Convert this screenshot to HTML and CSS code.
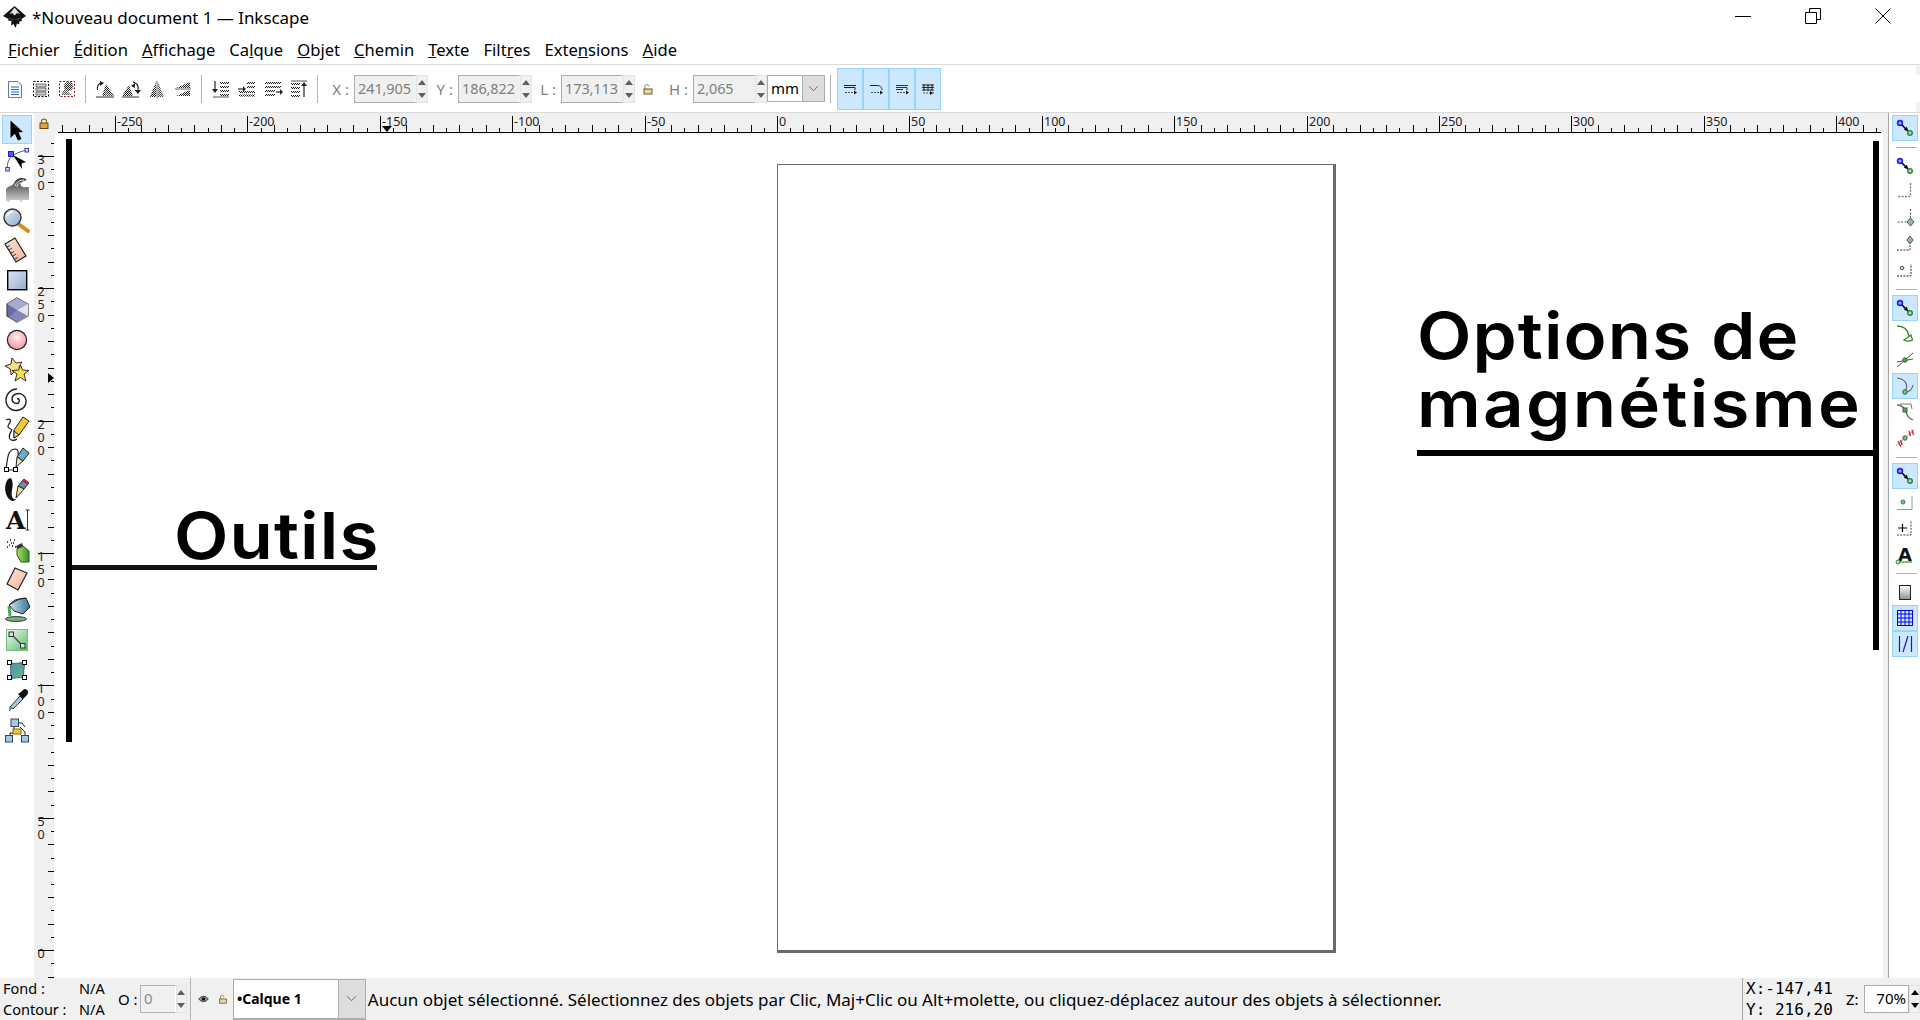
FILE: index.html
```html
<!DOCTYPE html>
<html lang="fr">
<head>
<meta charset="utf-8">
<title>*Nouveau document 1 — Inkscape</title>
<link rel="stylesheet" href="styles.css">
</head>
<body>
<svg class="defs" aria-hidden="true">
  <defs>
    <pattern id="dith" width="2" height="2" patternUnits="userSpaceOnUse"><rect width="2" height="2" fill="#e9e9e9"/><rect width="1" height="1" fill="#222"/><rect x="1" y="1" width="1" height="1" fill="#222"/></pattern>
    <pattern id="dithy" width="2" height="2" patternUnits="userSpaceOnUse"><rect width="2" height="2" fill="#efe3b8"/><rect width="1" height="1" fill="#555"/><rect x="1" y="1" width="1" height="1" fill="#555"/></pattern>
    <linearGradient id="gGrey" x1="0" y1="0" x2="0" y2="1"><stop offset="0" stop-color="#333"/><stop offset="1" stop-color="#d4d4d4"/></linearGradient>
    <linearGradient id="gBlue" x1="0" y1="0" x2="1" y2="1"><stop offset="0" stop-color="#dce8f4"/><stop offset="1" stop-color="#8fadcf"/></linearGradient>
    <linearGradient id="gPeach" x1="0" y1="0" x2="1" y2="1"><stop offset="0" stop-color="#fbe2d6"/><stop offset="1" stop-color="#f2b59c"/></linearGradient>
    <radialGradient id="gPink" cx=".5" cy=".35" r=".7"><stop offset="0" stop-color="#fff0f0"/><stop offset="1" stop-color="#f58a98"/></radialGradient>
    <linearGradient id="gGreen" x1="0" y1="0" x2="1" y2="1"><stop offset="0" stop-color="#f4fbf4"/><stop offset="1" stop-color="#59b96b"/></linearGradient>
    <linearGradient id="gCan" x1="0" y1="0" x2="1" y2="0"><stop offset="0" stop-color="#b6e06a"/><stop offset="1" stop-color="#2c8f28"/></linearGradient>
    <linearGradient id="gTeal" x1="0" y1="0" x2="1" y2="1"><stop offset="0" stop-color="#4e8fb0"/><stop offset="1" stop-color="#6db58e"/></linearGradient>
    <linearGradient id="gBucket" x1="0" y1="0" x2="1" y2="0"><stop offset="0" stop-color="#cfe4ee"/><stop offset="1" stop-color="#2f7395"/></linearGradient>
    <linearGradient id="gPage" x1="0" y1="0" x2="0" y2="1"><stop offset="0" stop-color="#fff"/><stop offset="1" stop-color="#8f8f8f"/></linearGradient>
    <symbol id="snapnodes" viewBox="0 0 26 26">
      <circle cx="8" cy="8" r="2.4" fill="#a0a0ff" stroke="#2222ee" stroke-width="1.6"/>
      <circle cx="18" cy="18" r="2.2" fill="#bfe0bf" stroke="#2d8a3e" stroke-width="1.6"/>
      <path d="M10 10L14 14" stroke="#000" stroke-width="1.6"/>
      <path d="M16.5 16.500L11.800 14.800L14.800 11.800Z" fill="#000"/>
    </symbol>
  </defs>
</svg>

<div class="app">
  <header class="titlebar">
    <svg class="logo" viewBox="0 0 24 24">
      <path d="M11.500 2L23 12L18.500 15L19 17L16.500 17.500L16 20.500L14 19.500L12.500 24L10.500 20L8 21.500L8.500 17L5 16.500L5.500 15L0 12Z" fill="#111"/>
      <path d="M11.500 3.500L6.500 10L9.500 9L11.500 11.500L14 9L17 10Z" fill="#dfe6ee"/>
      <path d="M4 13L11.500 15L19 13L14.500 16.500L11.500 15L9 16.500Z" fill="#3a3a3a"/>
    </svg>
    <span class="doc-title">*Nouveau document 1 — Inkscape</span>
    <div class="win-controls">
      <svg class="win-btn" viewBox="0 0 16 16"><path d="M0 8.500H16" stroke="#000" fill="none"/></svg>
      <svg class="win-btn" viewBox="0 0 16 16"><path d="M0.500 4.500H11.500V15.500H0.500ZM4.500 4.500V0.500H15.500V11.500H11.500" stroke="#000" fill="none"/></svg>
      <svg class="win-btn" viewBox="0 0 16 16"><path d="M0.500 0.500L15.500 15.500M15.500 0.500L0.500 15.500" stroke="#000" fill="none"/></svg>
    </div>
  </header>

  <nav class="menubar">
    <span class="menu-item"><u>F</u>ichier</span>
    <span class="menu-item"><u>É</u>dition</span>
    <span class="menu-item"><u>A</u>ffichage</span>
    <span class="menu-item">Ca<u>l</u>que</span>
    <span class="menu-item"><u>O</u>bjet</span>
    <span class="menu-item"><u>C</u>hemin</span>
    <span class="menu-item"><u>T</u>exte</span>
    <span class="menu-item">Filt<u>r</u>es</span>
    <span class="menu-item">Exte<u>n</u>sions</span>
    <span class="menu-item"><u>A</u>ide</span>
  </nav>

  <div class="commandbar">
    <div class="cmd-btn"><svg class="ico26" viewBox="0 0 26 26"><path d="M6.500 5.500H16L19.500 9V21.500H6.500Z" fill="#f6f9fd" stroke="#5b7ea8"/><path d="M9 11H17M9 13.500H17M9 16H17M9 18.500H17" stroke="#2f66b3"/></svg></div>
    <div class="cmd-btn"><svg class="ico26" viewBox="0 0 26 26"><rect x="5.500" y="5.500" width="15" height="15" fill="none" stroke="#000" stroke-dasharray="2 1.500"/><path d="M8 8H18V11H8ZM8 12H18V15H8ZM8 16H18V19H8Z" fill="#cfcfcf" stroke="#444" stroke-width=".7"/></svg></div>
    <div class="cmd-btn"><svg class="ico26" viewBox="0 0 26 26"><rect x="5.500" y="5.500" width="15" height="15" fill="none" stroke="#8a1c1c" stroke-dasharray="2 1.500"/><circle cx="14.500" cy="10.500" r="4.600" fill="url(#dith)"/><path d="M7 19L11 12L17 19Z" fill="url(#dithy)"/></svg></div>
    <div class="cmd-sep"></div>
    <div class="cmd-btn"><svg class="ico26" viewBox="0 0 26 26"><path d="M10 20L14 8L22 20Z" fill="url(#dith)"/><path d="M4 21H22" stroke="#333"/><path d="M9 7C6 8 5 11 5.500 14" stroke="#222" fill="none" stroke-width="1.200"/><path d="M8 5L12 7L8 10Z" fill="#222"/><path d="M13 15L21 20H13Z" fill="url(#dithy)"/></svg></div>
    <div class="cmd-btn"><svg class="ico26" viewBox="0 0 26 26"><path d="M4 20L11 9L15 20Z" fill="url(#dith)"/><path d="M4 21H21" stroke="#333"/><path d="M15 6C19 7 21 10 20 14" stroke="#222" fill="none" stroke-width="1.200"/><path d="M16.500 14H23L20 18ZM13 10L17 7L17 12Z" fill="#222"/></svg></div>
    <div class="cmd-btn"><svg class="ico26" viewBox="0 0 26 26"><path d="M12 6V21H6Z" fill="url(#dith)"/><path d="M14 6V21H20Z" fill="url(#dithy)"/><path d="M13 5V22" stroke="#666"/></svg></div>
    <div class="cmd-btn"><svg class="ico26" viewBox="0 0 26 26"><path d="M20 6V12H6Z" fill="url(#dith)"/><path d="M20 14V20H6Z" fill="url(#dith)"/><path d="M5 13H21" stroke="#666"/></svg></div>
    <div class="cmd-sep"></div>
    <div class="cmd-btn"><svg class="ico26" viewBox="0 0 26 26"><path d="M7 5V15" stroke="#222" stroke-width="1.200"/><path d="M4 13H10L7 17Z" fill="#222"/><path d="M12 6H21V8H12ZM12 10H21V12H12ZM12 14H21V16H12ZM12 18H21V20H12Z" fill="url(#dith)"/><path d="M5 21H21" stroke="#555"/></svg></div>
    <div class="cmd-btn"><svg class="ico26" viewBox="0 0 26 26"><path d="M4 13H10" stroke="#222" stroke-width="1.200"/><path d="M9 10V16L12 13Z" fill="#222"/><path d="M13 6H21V8H13ZM13 10H21V12H13ZM5 15H21V17H5ZM5 18.500H21V20.500H5Z" fill="url(#dith)"/></svg></div>
    <div class="cmd-btn"><svg class="ico26" viewBox="0 0 26 26"><path d="M5 6H21V8H5ZM5 10H21V12H5ZM5 14H15V16H5ZM5 18H15V20H5Z" fill="url(#dith)"/><path d="M16 16H21" stroke="#222" stroke-width="1.200"/><path d="M20 13V19L23 16Z" fill="#222"/></svg></div>
    <div class="cmd-btn"><svg class="ico26" viewBox="0 0 26 26"><path d="M5 5H21" stroke="#555"/><path d="M5 7H14V9H5ZM5 11H14V13H5ZM5 15H14V17H5ZM5 19H14V21H5Z" fill="url(#dith)"/><path d="M18 9V21" stroke="#222" stroke-width="1.200"/><path d="M15 10H21L18 6Z" fill="#222"/></svg></div>
    <div class="cmd-sep cmd-sep-fields"></div>

    <div class="coord-label coord-x">X :</div>
    <div class="coord-input">241,905</div>
    <div class="spin"><span class="up"></span><span class="down"></span></div>
    <div class="coord-label coord-y">Y :</div>
    <div class="coord-input">186,822</div>
    <div class="spin"><span class="up"></span><span class="down"></span></div>
    <div class="coord-label coord-l">L :</div>
    <div class="coord-input">173,113</div>
    <div class="spin"><span class="up"></span><span class="down"></span></div>
    <div class="lock-slot">
      <svg class="ico12" viewBox="0 0 12 12"><path d="M3 6V3.500C3 1 7 1 7 3.500" fill="none" stroke="#777"/><rect x="2" y="6" width="8" height="5" fill="#e9d9a0" stroke="#6a5a20"/></svg>
    </div>
    <div class="coord-label coord-h">H :</div>
    <div class="coord-input">2,065</div>
    <div class="spin"><span class="up"></span><span class="down"></span></div>
    <div class="unit-combo"><span class="unit-val">mm</span><span class="combo-btn"><svg class="chev" viewBox="0 0 12 8"><path d="M1 1.500L6 6.500L11 1.500" fill="none" stroke="#555"/></svg></span></div>
    <div class="cmd-sep"></div>
    <div class="snap-toggle"><svg class="ico26" viewBox="0 0 26 26"><path d="M7 9.500H19M7 11.500H18V14" stroke="#222" fill="none"/><path d="M8 16.500H19" stroke="#555" stroke-dasharray="2 1"/><path d="M17 14.500L20 16.500L17 18.500Z" fill="#111"/></svg></div>
    <div class="snap-toggle"><svg class="ico26" viewBox="0 0 26 26"><path d="M7 9.500H14C18 9.500 19 12 19 14" stroke="#222" fill="none"/><path d="M8 16.500H19" stroke="#555" stroke-dasharray="2 1"/><path d="M17 14.500L20 16.500L17 18.500Z" fill="#111"/></svg></div>
    <div class="snap-toggle"><svg class="ico26" viewBox="0 0 26 26"><path d="M7 9.500H19M7 11.500H18V14M7 13.500H14" stroke="#333" fill="none"/><path d="M8 16.500H19" stroke="#555" stroke-dasharray="2 1"/><path d="M17 14.500L20 16.500L17 18.500Z" fill="#111"/></svg></div>
    <div class="snap-toggle"><svg class="ico26" viewBox="0 0 26 26"><path d="M7 9H19M7 11.500H19M7 14H19M9 8V15M13 8V15M17 8V15" stroke="#222" fill="none"/><path d="M8 17H19" stroke="#555" stroke-dasharray="2 1"/><path d="M15 15L18 17L15 19Z" fill="#111"/></svg></div>
  </div>

  <main class="workspace">
    <aside class="toolbox">
      <div class="tool tool-on"><svg class="ico30" viewBox="0 0 30 30"><path d="M8.500 5.500V23L12.800 18.800L16 25.500L19.500 24L16.500 17.500L21 17Z" fill="#000"/></svg></div>
      <div class="tool"><svg class="ico30" viewBox="0 0 30 30"><path d="M5.300 24C5 15 8 9 24.700 5" fill="none" stroke="#555"/><rect x="3.800" y="22.500" width="3.500" height="3.500" fill="#dde" stroke="#33c"/><rect x="23" y="3.500" width="3.500" height="3.500" fill="#dde" stroke="#33c"/><rect x="6.500" y="6.500" width="5" height="5" fill="#55f" stroke="#22b"/><path d="M11 10L24 17L19.500 18.500L20 24Z" fill="#000"/></svg></div>
      <div class="tool"><svg class="ico30" viewBox="0 0 30 30"><path d="M4 26V14C7 10 10 12 12 8C14 3 20 2 24 4C26 6 22 5 20 7C18 9 18 11 21 12C24 13 26 11 27 13V25H20V27H18V25H8V27Z" fill="url(#gGrey)"/><path d="M13 11C14 7 18 5 22 5M15 12C15 9 17 8 19 8" fill="none" stroke="#eee"/></svg></div>
      <div class="tool"><svg class="ico30" viewBox="0 0 30 30"><path d="M17 19.500L26 26" stroke="#d98a1f" stroke-width="4" stroke-linecap="round"/><circle cx="10.500" cy="12.500" r="8.500" fill="url(#gBlue)" stroke="#333" stroke-width="1.400"/><path d="M5.500 11C6 8 8 7 11 6.500" stroke="#fff" fill="none" stroke-width="1.500"/></svg></div>
      <div class="tool"><svg class="ico30" viewBox="0 0 30 30"><path d="M3 9L13 3L24 21L14 27Z" fill="url(#gPeach)" stroke="#222" stroke-width="1.200"/><path d="M5 12L8 10.500M7 15L10 13M9 18L12 16.500M11 21L14 19M13 24L16 22.500" stroke="#333"/></svg></div>
      <div class="tool"><svg class="ico30" viewBox="0 0 30 30"><rect x="5.700" y="5.700" width="19" height="19" fill="url(#gBlue)" stroke="#000" stroke-width="1.400"/></svg></div>
      <div class="tool"><svg class="ico30" viewBox="0 0 30 30"><path d="M15 3L26 9V21L15 27L5 21V9Z" fill="#6a6aa8" stroke="#444" stroke-width="1.200"/><path d="M15 3L26 9L15 15L5 9Z" fill="#a8a8d0"/><path d="M26 9V21L15 27V15Z" fill="#e4e4ef"/><path d="M15 15L26 21L15 27L7 22Z" fill="#8585bb"/></svg></div>
      <div class="tool"><svg class="ico30" viewBox="0 0 30 30"><circle cx="15" cy="15" r="9.600" fill="url(#gPink)" stroke="#222" stroke-width="1.200"/></svg></div>
      <div class="tool"><svg class="ico30" viewBox="0 0 30 30"><path d="M10 3L14 8L20 7L17 12L19 17L13 16L9 20L8.500 14L3 11L9 9Z" fill="#f4e08a" stroke="#333"/><path d="M18.500 10L20.500 15L27 15.500L22 19L24 26L18.500 22.500L13 26L15 19L10 15.500L16.500 15Z" fill="#f7e24e" stroke="#333"/></svg></div>
      <div class="tool"><svg class="ico30" viewBox="0 0 30 30"><path d="M15 14C17 13 18 15 17 17C15 20 10 18 10 14C10 9 17 7 21 10C26 14 25 23 17 25C10 27 4 22 4 15C4 9 9 4 15 4" fill="none" stroke="#222" stroke-width="1.400"/></svg></div>
      <div class="tool"><svg class="ico30" viewBox="0 0 30 30"><path d="M4 5C8 3 10 5 7 9C5 12 6 13 9 14C12 15 5 19 8 24C10 27 13 25 15 24" fill="none" stroke="#222" stroke-width="1.300"/><path d="M21 2L27 6L17 20L12 23L12 15Z" fill="#f2c82f" stroke="#222"/><path d="M12 16L17 20L12 23Z" fill="#f5d9b0" stroke="#222"/></svg></div>
      <div class="tool"><svg class="ico30" viewBox="0 0 30 30"><path d="M5 25H13M4 24C6 10 6 5 13 4C17 4 17 9 15 16" fill="none" stroke="#222" stroke-width="1.200"/><rect x="2.500" y="22.500" width="4" height="4" fill="#fff" stroke="#000"/><rect x="11.500" y="22.500" width="4" height="4" fill="#fff" stroke="#000"/><path d="M21 3L27 8L21 16L15 12Z" fill="#6fa9c8" stroke="#222"/><path d="M15 12L21 16L14 22Z" fill="#f5e3b3" stroke="#222"/></svg></div>
      <div class="tool"><svg class="ico30" viewBox="0 0 30 30"><path d="M6 4C2 10 2 18 7 24C10 27 13 26 14 24C10 25 9 20 10 15C11 10 11 6 9 3Z" fill="#111"/><path d="M22 4L27 8L22 14L16 11Z" fill="#5e8fb3" stroke="#222"/><path d="M22 4L27 8L25.500 10L20.500 6Z" fill="#c8202a"/><path d="M16 11L22 14L14 23Z" fill="#f3dc8b" stroke="#222"/></svg></div>
      <div class="tool"><svg class="ico30" viewBox="0 0 30 30"><text x="4" y="24" class="tool-letter">A</text><path d="M25.500 5V25M23.500 5H27.500M23.500 25H27.500" stroke="#333" fill="none"/></svg></div>
      <div class="tool"><svg class="ico30" viewBox="0 0 30 30"><path d="M5 7H6M8 5H9M11 8H12M7 10H8M10 11H11M13 12H14M5 12H6M12 5H13M9 8H10" stroke="#111" stroke-width="1.400"/><path d="M15 14L21 11L27 16L27 27L19 27L15 20Z" fill="url(#gCan)" stroke="#1f5a1c"/><path d="M14 11L20 8L21 11L15 14Z" fill="#333"/></svg></div>
      <div class="tool"><svg class="ico30" viewBox="0 0 30 30"><path d="M13 3L25 8L16 25L5 19Z" fill="url(#gPeach)" stroke="#222" stroke-width="1.200"/></svg></div>
      <div class="tool"><svg class="ico30" viewBox="0 0 30 30"><ellipse cx="14" cy="24" rx="10.500" ry="2.400" fill="#71b877" stroke="#333"/><path d="M7 11L8 21" stroke="#55a35d" stroke-width="3"/><path d="M13 5L24 3L28 12L21 19L12 16L7 10Z" fill="url(#gBucket)" stroke="#222"/><path d="M7 10L17 4C21 3 24 3 24 4" fill="none" stroke="#222"/></svg></div>
      <div class="tool"><svg class="ico30" viewBox="0 0 30 30"><rect x="4.500" y="4.500" width="21" height="21" fill="url(#gGreen)" stroke="#70c080"/><path d="M9.500 9.500L20.500 20.500" stroke="#444" stroke-width="1.200"/><rect x="7" y="7" width="4.500" height="4.500" fill="#ddd" stroke="#333"/><rect x="18.500" y="18.500" width="4.500" height="4.500" fill="#ddd" stroke="#333"/></svg></div>
      <div class="tool"><svg class="ico30" viewBox="0 0 30 30"><path d="M8 8C13 9 18 8 23 7C22 13 21 18 22 23C17 22 12 23 8 24C9 18 9 13 8 8Z" fill="url(#gTeal)" stroke="#3b6a6a"/><rect x="5.500" y="5.500" width="4" height="4" fill="#fff" stroke="#000"/><rect x="20.500" y="5.500" width="4" height="4" fill="#fff" stroke="#000"/><rect x="5.500" y="20.500" width="4" height="4" fill="#fff" stroke="#000"/><rect x="20.500" y="20.500" width="4" height="4" fill="#fff" stroke="#000"/></svg></div>
      <div class="tool"><svg class="ico30" viewBox="0 0 30 30"><path d="M8 22L18 11L21 14L11 24Z" fill="#a9c6db" stroke="#333"/><path d="M16 9L21 14L23 12L25 10C28 7 24 2 21 5L19 7Z" fill="#111"/><path d="M8 22L9 24L7.500 26Z" fill="#4a7fa5" stroke="#4a7fa5"/></svg></div>
      <div class="tool"><svg class="ico30" viewBox="0 0 30 30"><path d="M12 12V18M18 12L23 17V20M12 18H8V21M15 8H20L23 12" fill="none" stroke="#222"/><rect x="9" y="4" width="7.500" height="7.500" fill="#a9c7e4" stroke="#345"/><rect x="11" y="14" width="8" height="5" fill="#f3c53a" stroke="#86670c"/><rect x="3.500" y="20.500" width="7" height="6.500" fill="#a9c7e4" stroke="#345"/><rect x="19.500" y="20.500" width="7" height="6.500" fill="#a9c7e4" stroke="#345"/></svg></div>
    </aside>

    <div class="stage">
      <div class="corner">
        <svg class="ico10" viewBox="0 0 10 11"><path d="M2.500 5V3.200C2.500 0.500 7.500 0.500 7.500 3.200V5" fill="none" stroke="#8a6a1a" stroke-width="1.200"/><rect x="1" y="5" width="8" height="5.500" fill="#d9a83a" stroke="#6b4a0c"/></svg>
      </div>
      <div class="hruler" id="hruler"><span class="mark-h"></span></div>
      <div class="vruler" id="vruler"><span class="mark-v"></span></div>
      <section class="canvas">
        <div class="page"></div>
        <div class="bar bar-left"></div>
        <div class="bar bar-left-h"></div>
        <div class="note note-tools">Outils</div>
        <div class="bar bar-right"></div>
        <div class="bar bar-right-h"></div>
        <div class="note note-snap"><div>Options de</div><div class="note-line-wide">magnétisme</div></div>
      </section>
    </div>

    <aside class="snapbar">
      <div class="snap snap-on"><svg class="ico26"><use href="#snapnodes"/></svg></div>
      <div class="snap-sep"></div>
      <div class="snap"><svg class="ico26"><use href="#snapnodes"/></svg></div>
      <div class="snap"><svg class="ico26" viewBox="0 0 26 26"><path d="M18.500 4V17.500H5" fill="none" stroke="#6a8a6a" stroke-width="1.400" stroke-dasharray="2 1.400"/></svg></div>
      <div class="snap"><svg class="ico26" viewBox="0 0 26 26"><path d="M18.500 4V17H5" fill="none" stroke="#556" stroke-width="1.200" stroke-dasharray="2 1.400"/><path d="M18.500 13L22 17L18.500 21L15 17Z" fill="#9ab79a" stroke="#456"/></svg></div>
      <div class="snap"><svg class="ico26" viewBox="0 0 26 26"><path d="M5 19H18V6" fill="none" stroke="#333" stroke-dasharray="2 1.200"/><path d="M18 5L21 9L18 13L15 9Z" fill="#9ab79a" stroke="#456"/></svg></div>
      <div class="snap"><svg class="ico26" viewBox="0 0 26 26"><path d="M5 19H19V7" fill="none" stroke="#222" stroke-dasharray="2 1.200"/><circle cx="10" cy="11" r="1.800" fill="#bfe0bf" stroke="#456"/></svg></div>
      <div class="snap-sep"></div>
      <div class="snap snap-on"><svg class="ico26"><use href="#snapnodes"/></svg></div>
      <div class="snap"><svg class="ico26" viewBox="0 0 26 26"><path d="M5 5C12 5 16 9 17 15" fill="none" stroke="#2d8a2d" stroke-width="1.400"/><path d="M12 19L19 14L20.500 19C17 21 14 20 12 19Z" fill="none" stroke="#2d8a2d" stroke-width="1.300"/></svg></div>
      <div class="snap"><svg class="ico26" viewBox="0 0 26 26"><path d="M5 20L21 6" stroke="#555"/><path d="M5 15L21 12" stroke="#555"/><circle cx="13" cy="13" r="2.200" fill="#5aa05a" stroke="#2d6a3e"/></svg></div>
      <div class="snap snap-on"><svg class="ico26" viewBox="0 0 26 26"><path d="M5 5C13 6 17 11 13 19M21 12C20 17 17 19 13 19" fill="none" stroke="#666" stroke-width="1.200"/><circle cx="13" cy="19" r="2.300" fill="#7fbf7f" stroke="#2d6a3e"/></svg></div>
      <div class="snap"><svg class="ico26" viewBox="0 0 26 26"><path d="M5 6C10 6 12 9 13 11C15 15 15 19 21 21" fill="none" stroke="#666" stroke-width="1.300"/><path d="M8 5H19L20 10" fill="none" stroke="#777"/><rect x="11" y="9" width="4" height="4" fill="#5aa05a" stroke="#2d6a3e"/></svg></div>
      <div class="snap"><svg class="ico26" viewBox="0 0 26 26"><path d="M4 21L22 5" stroke="#999"/><path d="M6 16L9 22M8.500 15L10 20M17 6L18.500 11M20 5L21.500 10" stroke="#cc2222" stroke-width="1.300"/><circle cx="13" cy="13" r="2.200" fill="#7fbf7f" stroke="#2d6a3e"/></svg></div>
      <div class="snap-sep"></div>
      <div class="snap snap-on"><svg class="ico26"><use href="#snapnodes"/></svg></div>
      <div class="snap"><svg class="ico26" viewBox="0 0 26 26"><path d="M5 20.500H20V7" fill="none" stroke="#999"/><circle cx="11" cy="13" r="2" fill="#7fbf7f" stroke="#2d8a3e"/></svg></div>
      <div class="snap"><svg class="ico26" viewBox="0 0 26 26"><path d="M6 13H15M10.500 9V17" stroke="#000" stroke-width="1.200"/><path d="M5 20H19V5" fill="none" stroke="#444" stroke-dasharray="2 1.200"/></svg></div>
      <div class="snap"><svg class="ico26" viewBox="0 0 26 26"><text x="6" y="20" class="snap-letter">A</text><path d="M6 21H20" stroke="#3a9a4a" stroke-width="1.300"/><circle cx="6" cy="21" r="2" fill="#bfe0bf" stroke="#2d8a3e"/></svg></div>
      <div class="snap-sep"></div>
      <div class="snap"><svg class="ico26" viewBox="0 0 26 26"><rect x="7.500" y="6.500" width="11" height="14" fill="url(#gPage)" stroke="#222"/></svg></div>
      <div class="snap snap-on"><svg class="ico26" viewBox="0 0 26 26"><path d="M5 9H21M5 13H21M5 17H21M9 5V21M13 5V21M17 5V21M5 5.500H21M5 20.500H21M5.500 5V21M20.500 5V21" fill="none" stroke="#0000e0"/></svg></div>
      <div class="snap snap-on"><svg class="ico26" viewBox="0 0 26 26"><path d="M7.500 5V21M19.500 5V21M11 21L16 5" fill="none" stroke="#1515dd" stroke-width="1.200"/></svg></div>
    </aside>
  </main>

  <footer class="statusbar">
    <div class="style-block">
      <span>Fond :</span><span>N/A</span>
      <span>Contour :</span><span>N/A</span>
    </div>
    <div class="opacity-label">O :</div>
    <div class="opacity-input">0</div>
    <div class="spin spin-status"><span class="up"></span><span class="down"></span></div>
    <div class="status-sep"></div>
    <svg class="layer-eye" viewBox="0 0 14 10"><path d="M1 5C4 0.500 10 0.500 13 5C10 9.500 4 9.500 1 5Z" fill="#999" stroke="#222"/><circle cx="7" cy="5" r="2.200" fill="#111"/></svg>
    <svg class="layer-lock" viewBox="0 0 12 12"><path d="M3 6V3.500C3 1 7 1 7 3.500" fill="none" stroke="#777"/><rect x="2" y="6" width="8" height="5" fill="#e9d9a0" stroke="#6a5a20"/></svg>
    <div class="layer-combo"><span class="layer-name">•Calque 1</span><span class="combo-btn layer-btn"><svg class="chev" viewBox="0 0 12 8"><path d="M1 1.500L6 6.500L11 1.500" fill="none" stroke="#555"/></svg></span></div>
    <div class="status-msg">Aucun objet sélectionné. Sélectionnez des objets par Clic, Maj+Clic ou Alt+molette, ou cliquez-déplacez autour des objets à sélectionner.</div>
    <div class="pos-block"><span>X:-147,41</span><span>Y: 216,20</span></div>
    <div class="zoom-label">Z:</div>
    <div class="zoom-input">70%</div>
    <div class="spin spin-zoom"><span class="up"></span><span class="down"></span></div>
  </footer>
</div>
<script src="ruler.js"></script>
</body>
</html>
```

FILE: styles.css
```css
* { box-sizing: border-box; }
html, body { margin: 0; padding: 0; height: 100%; }
body { font-family: "Noto Sans", "Open Sans", sans-serif; background: #fff; color: #000; overflow: hidden; }
svg { display: block; flex: none; overflow: visible; }
.defs { position: absolute; width: 0; height: 0; }

.app { width: 1920px; height: 1020px; display: flex; flex-direction: column; }

/* Title bar */
.titlebar { height: 32px; display: flex; align-items: center; padding-left: 3px; background: #fff; }
.logo { width: 24px; height: 24px; }
.doc-title { margin-left: 5px; font-size: 17px; padding-top: 2px; letter-spacing: -0.05px; }
.win-controls { margin-left: auto; display: flex; align-items: center; padding-right: 29px; gap: 54px; }
.win-btn { width: 16px; height: 16px; }

/* Menu */
.menubar { height: 33px; display: flex; align-items: center; gap: 14px; padding: 3px 0 0 8px; border-bottom: 1px solid #dadada; font-size: 16.6px; }
.menu-item { white-space: nowrap; }

/* Command bar */
.commandbar { position: relative; height: 48px; display: flex; align-items: center; padding-left: 2px; border-bottom: 1px solid #dadada; background: #fff; font-size: 15px; }
.commandbar::before, .commandbar::after { content: ""; position: absolute; right: 0; width: 4px; height: 10px; background: #f0f0f0; }
.commandbar::before { top: 0; }
.commandbar::after { bottom: 0; }
.cmd-btn { width: 26px; height: 26px; }
.ico26 { width: 26px; height: 26px; }
.ico30 { width: 30px; height: 30px; }
.ico12 { width: 12px; height: 12px; }
.ico10 { width: 10px; height: 11px; }
.cmd-sep { width: 1px; height: 28px; margin: 0 6px 0 5px; background: #b4b4b4; flex: none; }
.cmd-sep-fields { margin-right: 0; }
.coord-label { color: #7f7f7f; text-align: right; padding-right: 5px; white-space: nowrap; }
.coord-x { width: 36px; }
.coord-y { width: 30px; }
.coord-l { width: 29px; }
.coord-h { width: 32px; }
.coord-input { width: 62px; height: 28px; border: 1px solid #adadad; border-right-color: #f0f0f0; background: #f0f0f0; color: #7f7f7f; line-height: 25px; padding-left: 3px; font-size: 14.5px; letter-spacing: -0.1px; }
.spin { width: 12px; height: 28px; background: #f0f0f0; border: 1px solid #e4e4e4; display: flex; flex-direction: column; align-items: center; justify-content: space-around; flex: none; }
.spin span { width: 0; height: 0; border-left: 4.5px solid transparent; border-right: 4.5px solid transparent; }
.spin .up { border-bottom: 5px solid #5f5f5f; }
.spin .down { border-top: 5px solid #5f5f5f; }
.lock-slot { width: 26px; display: flex; justify-content: center; }
.unit-combo { width: 58px; height: 27px; display: flex; border: 1px solid #adadad; background: #fff; }
.unit-val { flex: 1; padding-left: 3px; line-height: 24px; color: #000; font-size: 15px; }
.combo-btn { width: 22px; background: #dddddd; border-left: 1px solid #adadad; display: flex; align-items: center; justify-content: center; }
.chev { width: 11px; height: 7px; }
.snap-toggle { width: 26px; height: 42px; background: #cce8ff; border: 1px solid #99d1ff; display: flex; align-items: center; justify-content: center; }

/* Workspace */
.workspace { flex: 1; display: flex; min-height: 0; }
.toolbox { width: 34px; padding: 2px 2px 0; background: #fff; flex: none; }
.tool { width: 30px; height: 30px; border: 1px solid transparent; position: relative; }
.tool svg { margin: -1px; }
.tool-on { background: #cce8ff; border-color: #99d1ff; height: 29px; margin-bottom: 1px; }
.tool-letter { font-family: "DejaVu Serif", serif; font-weight: 700; font-size: 25px; fill: #111; }
.stage { flex: 1; display: grid; grid-template-columns: 20px 1829px; grid-template-rows: 21px 1fr; background: #f0f0f0; min-width: 0; }
.corner { display: flex; justify-content: flex-end; padding: 5px 5px 0 0; }
.hruler, .vruler { position: relative; overflow: hidden; }
.rule-svg { position: absolute; left: 0; top: 0; }
.rule-tick { stroke: #000; stroke-width: 1; shape-rendering: crispEdges; }
.h-label { position: absolute; top: 0; font-size: 12.5px; line-height: 17px; color: #222; }
.v-label { position: absolute; left: 3px; width: 8px; font-size: 12.5px; line-height: 12.8px; color: #222; word-break: break-all; text-align: center; }
.mark-h { position: absolute; left: 328px; top: 13px; width: 0; height: 0; border-left: 5px solid transparent; border-right: 5px solid transparent; border-top: 6px solid #000; z-index: 2; }
.mark-v { position: absolute; left: 14px; top: 239px; width: 0; height: 0; border-top: 5px solid transparent; border-bottom: 5px solid transparent; border-left: 6px solid #000; z-index: 2; }

/* Canvas: annotations sit on a free drawing surface */
.canvas { position: relative; background: #fff; overflow: hidden; }
.page { position: absolute; left: 723px; top: 30px; width: 558.5px; height: 788.5px; background: #fff; border: 1px solid #6a6a6a; border-right-width: 3px; border-bottom-width: 3px; }
.bar { position: absolute; background: #000; }
.bar-left { left: 12px; top: 5px; width: 6px; height: 603px; }
.bar-left-h { left: 18px; top: 431px; width: 305px; height: 5px; background: #111; }
.bar-right { left: 1819px; top: 7px; width: 6px; height: 509px; }
.bar-right-h { left: 1363px; top: 316px; width: 456px; height: 6px; }
.note { position: absolute; font-family: Inter, "Open Sans", sans-serif; font-weight: 600; font-size: 65px; line-height: 67.5px; color: #000; white-space: nowrap; letter-spacing: 1px; transform: scaleX(1.09); transform-origin: left top; }
.note-tools { left: 120px; top: 368px; }
.note-snap { left: 1363px; top: 168px; }
.note-line-wide { letter-spacing: 2.1px; }

/* Snap bar */
.snapbar { width: 32px; flex: none; background: #fff; border-left: 1px solid #a6a6a6; padding: 2px 2px 0 3px; }
.snap { width: 26px; height: 26px; border: 1px solid transparent; }
.snap svg { margin: -1px; }
.snap-on { background: #cce8ff; border-color: #99d1ff; }
.snap-sep { height: 1px; margin: 5.5px 1px 5.5px 4px; background: #b0b0b0; }
.snap-letter { font-family: "DejaVu Sans", sans-serif; font-weight: 700; font-size: 18px; fill: #111; }

/* Status bar */
.statusbar { height: 42px; display: flex; align-items: center; background: #f0f0f0; font-size: 15px; }
.style-block { width: 118px; padding-left: 3px; display: grid; grid-template-columns: 76px 1fr; grid-auto-rows: 21px; line-height: 21px; font-size: 14.5px; }
.opacity-label { width: 22px; white-space: nowrap; }
.opacity-input { width: 36px; height: 28px; background: #f0f0f0; border: 1px solid #b4b4b4; border-right-color: #fff; color: #8a8a8a; padding-left: 3px; line-height: 25px; }
.spin-status { width: 11px; margin-right: 3px; }
.status-sep { width: 1px; height: 42px; background: #b4b4b4; }
.layer-eye { width: 11px; height: 8px; margin-left: 7px; }
.layer-lock { width: 10px; height: 10px; margin-left: 9px; }
.layer-combo { width: 133px; height: 41px; margin-left: 5px; display: flex; background: #fff; border: 1px solid #adadad; border-bottom-width: 2px; }
.layer-name { flex: 1; padding-left: 3px; line-height: 38px; font-weight: 700; font-size: 14px; }
.layer-btn { width: 27px; }
.status-msg { margin-left: 2px; width: 1375px; font-size: 17px; white-space: nowrap; letter-spacing: -0.02px; }
.pos-block { width: 104px; height: 42px; padding-left: 3px; border-left: 1px solid #a6a6a6; display: flex; flex-direction: column; justify-content: center; font-family: "DejaVu Sans Mono", "Liberation Mono", monospace; font-size: 16px; line-height: 21px; }
.zoom-label { width: 18px; }
.zoom-input { width: 45px; height: 28px; background: #fff; border: 1px solid #adadad; text-align: right; padding-right: 2px; line-height: 25px; font-size: 15px; }
.spin-zoom { width: 11px; }
.spin-zoom .up { border-bottom-color: #000; }
.spin-zoom .down { border-top-color: #000; }
```

FILE: ruler.js
```js
// Draws the two Inkscape rulers: 50 mm majors, subdivided every 5 mm.
(function () {
  var NS = "http://www.w3.org/2000/svg";
  var STEP = 13.24;

  function makeSvg(w, h) {
    var s = document.createElementNS(NS, "svg");
    s.setAttribute("width", w);
    s.setAttribute("height", h);
    s.setAttribute("class", "rule-svg");
    return s;
  }
  function line(svg, x1, y1, x2, y2) {
    var l = document.createElementNS(NS, "line");
    l.setAttribute("x1", x1);
    l.setAttribute("y1", y1);
    l.setAttribute("x2", x2);
    l.setAttribute("y2", y2);
    l.setAttribute("class", "rule-tick");
    svg.appendChild(l);
  }

  // Horizontal ruler: box starts at x=54, zero at x=777.5, baseline at 19.5
  var h = document.getElementById("hruler");
  var hs = makeSvg(1846, 21);
  line(hs, 4, 19.5, 1827, 19.5);
  for (var k = -54; k <= 83; k++) {
    var x = Math.floor(723.5 + k * STEP) + 0.5;
    if (x < 4 || x > 1827) continue;
    var major = k % 10 === 0;
    var mid = k % 2 === 0;
    line(hs, x, major ? 3 : mid ? 12 : 15, x, 19.5);
    if (major) {
      var t = document.createElement("span");
      t.className = "h-label";
      t.textContent = String(k * 5);
      t.style.left = (x + 1.5) + "px";
      h.appendChild(t);
    }
  }
  h.appendChild(hs);

  // Vertical ruler: box starts at y=134, zero at y=950.7, baseline at x=20
  var v = document.getElementById("vruler");
  var vs = makeSvg(21, 844);
  line(vs, 20.5, 1, 20.5, 844);
  for (var n = -3; n <= 63; n++) {
    var y = Math.floor(816.7 - n * STEP) + 0.5;
    if (y < 0 || y > 844) continue;
    var maj = n % 10 === 0;
    var md = n % 2 === 0;
    line(vs, maj ? 4 : md ? 14 : 16.5, y, 21, y);
    if (maj) {
      var d = document.createElement("span");
      d.className = "v-label";
      d.textContent = String(n * 5);
      d.style.top = (y - 2.4) + "px";
      v.appendChild(d);
    }
  }
  v.appendChild(vs);
})();
```
